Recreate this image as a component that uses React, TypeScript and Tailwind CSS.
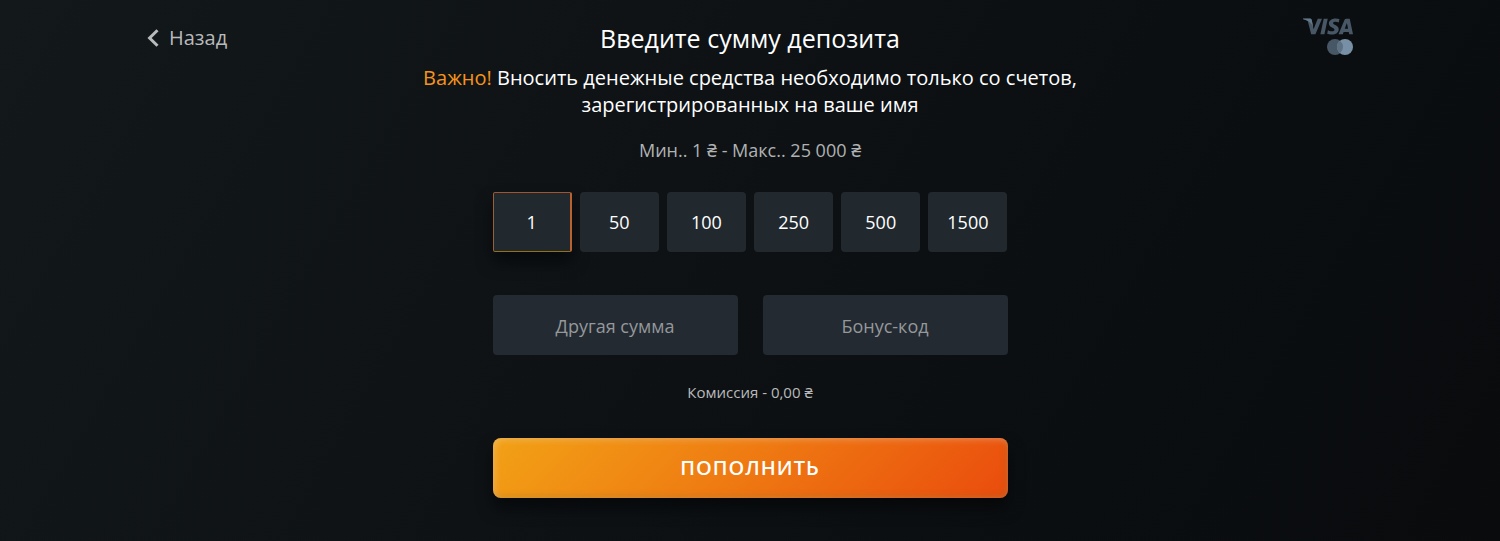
import { useState } from "react";
import { SiVisa } from "react-icons/si";

const AMOUNTS = [1, 50, 100, 250, 500, 1500];

interface AmountButtonProps {
  amount: number;
  isActive: boolean;
  onSelect: () => void;
}

const AmountButton = ({ amount, isActive, onSelect }: AmountButtonProps) => (
  <button
    type="button"
    aria-pressed={isActive}
    onClick={onSelect}
    className={
      isActive
        ? "h-[60px] rounded-xs border border-r-2 border-t-[#a0552f] border-r-[#b8622f] border-b-[#94701b] border-l-[#996035] bg-[#22292e] text-lg text-white shadow-[0_10px_16px_rgba(0,0,0,0.5)]"
        : "h-[60px] rounded bg-[#22292e] text-lg text-white"
    }
  >
    {amount}
  </button>
);

const BackLink = () => (
  <a href="#" className="mt-6 flex items-center gap-2.5 self-start justify-self-start text-xl leading-7 text-[#b9babb]">
    <svg width="12" height="18" viewBox="0 0 12 18" fill="none" aria-hidden="true">
      <path d="M10.500 1.200 2.600 9l7.900 7.800" stroke="currentColor" strokeWidth="3" />
    </svg>
    Назад
  </a>
);

const CardLogos = () => (
  <div className="mt-[18px] flex flex-col items-end gap-1 self-start justify-self-end">
    <div className="relative h-[17px] w-[50px] text-[#485765]">
      <SiVisa width="50" height="17" viewBox="0 8 24 8" title="Visa" className="h-[17px] w-[50px]" />
      <svg width="50" height="17" viewBox="0 0 50 17" aria-hidden="true" className="absolute inset-0">
        <path d="M0 1 .1.5h6.700c.9 0 1.600.3 1.900 1.300l1.400 7.100C8.300 4.800 5 2.200 0 1Z" fill="#62798c" />
      </svg>
    </div>
    <svg width="26" height="16" viewBox="0 0 26 16" aria-label="Mastercard" role="img">
      <circle cx="8" cy="8" r="8" fill="#485765" />
      <circle cx="18" cy="8" r="8" fill="#7890a5" />
      <path d="M13 1.760a8 8 0 0 1 0 12.480 8 8 0 0 1 0-12.480Z" fill="#5d7183" />
    </svg>
  </div>
);

const DepositForm = () => {
  const [selected, setSelected] = useState(1);

  return (
    <form className="mx-auto mt-7 w-full max-w-[515px]" onSubmit={(e) => e.preventDefault()}>
      <div className="grid grid-cols-6 gap-2">
        {AMOUNTS.map((amount) => (
          <AmountButton
            key={amount}
            amount={amount}
            isActive={amount === selected}
            onSelect={() => setSelected(amount)}
          />
        ))}
      </div>

      <div className="mt-[43px] grid grid-cols-2 gap-[25px]">
        <input
          type="text"
          inputMode="decimal"
          aria-label="Другая сумма"
          placeholder="Другая сумма"
          className="h-[60px] min-w-0 rounded bg-[#232a31] px-4 pt-0.5 text-center text-lg text-white outline-none placeholder:text-[#95989b]"
        />
        <input
          type="text"
          aria-label="Бонус-код"
          placeholder="Бонус-код"
          className="h-[60px] min-w-0 rounded bg-[#232a31] px-4 pt-0.5 text-center text-lg text-white outline-none placeholder:text-[#95989b]"
        />
      </div>

      <p className="mt-[25px] text-center text-[15px] leading-6 text-[#b9babb]">Комиссия - 0,00 ₴</p>

      <button
        type="submit"
        className="mt-[34px] h-[60px] w-full rounded-lg bg-linear-[135deg,#f2a116,#ef7d12_45%,#ea4c0d] text-xl font-semibold tracking-wider text-white uppercase shadow-[0_10px_16px_rgba(0,0,0,0.5),inset_2px_2px_6px_rgba(255,255,255,0.25),inset_-2px_-2px_6px_rgba(120,110,50,0.3)]"
      >
        Пополнить
      </button>
    </form>
  );
};

export default function App() {
  return (
    <main className="min-h-screen bg-linear-[120deg,#13181b,#0d1114_50%,#090b0d] px-4 pb-10 font-['Open_Sans','Noto_Sans',sans-serif]">
      <div className="mx-auto grid max-w-[1206px] grid-cols-[1fr_minmax(0,680px)_1fr]">
        <BackLink />
        <header className="pt-5 text-center text-white">
          <h1 className="text-[25px] leading-9">Введите сумму депозита</h1>
          <p className="mt-2 text-xl leading-[27px]">
            <span className="text-[#f7931a]">Важно!</span> Вносить денежные средства необходимо только со счетов,
            зарегистрированных на ваше имя
          </p>
          <p className="mt-[19px] text-lg leading-[27px] text-[#b0b2b3]">Мин.. 1 ₴ - Макс.. 25 000 ₴</p>
        </header>
        <CardLogos />
      </div>
      <DepositForm />
    </main>
  );
}
